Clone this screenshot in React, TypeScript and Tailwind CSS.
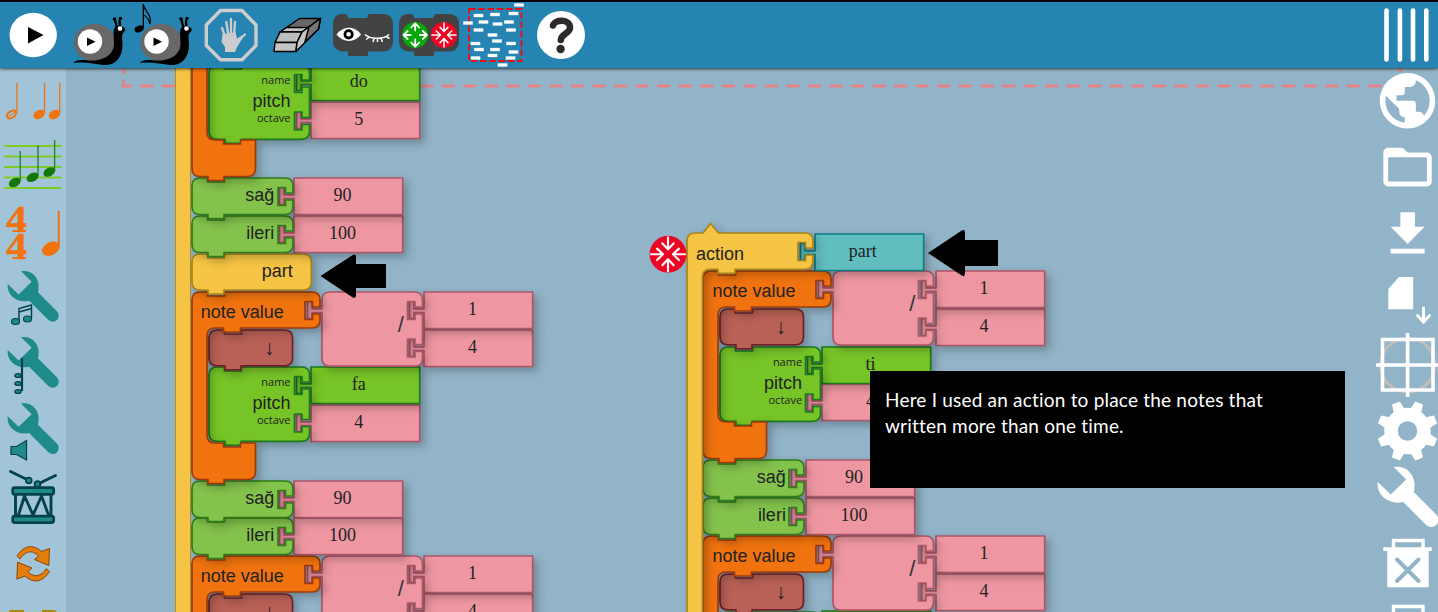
import React from "react";

type Tone = { fill: string; stroke: string };

const TONES: Record<string, Tone> = {
  orange: { fill: "#f0730f", stroke: "#9c3a0a" },
  yellow: { fill: "#f5c445", stroke: "#a9831a" },
  green: { fill: "#77c427", stroke: "#1b7a1c" },
  leaf: { fill: "#83c24b", stroke: "#2f7d17" },
  brown: { fill: "#b96156", stroke: "#71202a" },
  pink: { fill: "#ee97a2", stroke: "#ae5568" },
  teal: { fill: "#60bebe", stroke: "#0c7f86" },
};

/* ---------- block outlines ---------- */

const SOCKET_IN = 15;

function rightEdge(w: number, sockets: number[]): string {
  return sockets
    .map(
      (y) =>
        `V${y - 3.5} H${w - 7.5} V${y - 9} H${w - SOCKET_IN} V${y + 9} H${w - 7.5} V${y + 3.5} H${w}`
    )
    .join(" ");
}

function blockPath(w: number, h: number, sockets: number[], notch = true): string {
  const r = 8;
  const top = notch ? `H15.5 V4 H32.5 V0` : "";
  const tab = notch ? `H32 V${h + 4} H16 V${h}` : "";
  return `M${r} 0 ${top} H${w - r} Q${w} 0 ${w} ${r} ${rightEdge(w, sockets)} V${h - r} Q${w} ${h} ${w - r} ${h} ${tab} H${r} Q0 ${h} 0 ${h - r} V${r} Q0 0 ${r} 0 Z`;
}

function clampPath(): string {
  return `M8 0 H15.5 V4 H32.5 V0 H120 Q128 0 128 8 ${rightEdge(128, [18.5])} V28 Q128 36 120 36 H48.500 V40 H31.500 V36 H23 Q15 36 15 44 V143 Q15 151 23 151 H31.500 V155 H48.500 V151 H63.500 V179.500 Q63.500 187.500 55.500 187.500 H32 V191.500 H16 V187.500 H8 Q0 187.500 0 179.500 V8 Q0 0 8 0 Z`;
}

const PLUG = "V20.500 H-10 V26.500 H-14.500 V9.500 H-10 V16.800 H0";

const argPath = (h: number) => `M0 0 H108.700 V${h} H0 ${PLUG} Z`;

const DIVIDE_PATH = `M8 0 H92.500 Q100.500 0 100.500 8 ${rightEdge(100.5, [18.5, 56])} V66.200 Q100.500 74.200 92.500 74.200 H8 Q0 74.200 0 66.200 ${PLUG} V8 Q0 0 8 0 Z`;

function Shape({ d, tone }: { d: string; tone: Tone }) {
  return (
    <svg
      className="absolute top-0 left-0 h-px w-px overflow-visible drop-shadow-[4px_4px_4px_rgba(0,0,0,0.25)]"
      aria-hidden
    >
      <path d={d} fill={tone.fill} stroke={tone.stroke} strokeWidth="1.7" strokeLinejoin="round" />
    </svg>
  );
}

function Node({ x, y, children }: { x: number; y: number; children: React.ReactNode }) {
  return (
    <div className="absolute" style={{ left: x, top: y }}>
      {children}
    </div>
  );
}

function Arg({ x, y, text, tone = TONES.pink }: { x: number; y: number; text?: string; tone?: Tone }) {
  return (
    <Node x={x} y={y}>
      <Shape d={argPath(36.5)} tone={tone} />
      {text && (
        <div className="relative w-24 pt-2 text-center font-['Liberation_Serif',serif] text-[18px] leading-[18px] text-[#222]">
          {text}
        </div>
      )}
    </Node>
  );
}

const LABEL = "relative text-[18px] leading-[18px] whitespace-nowrap text-[#222]";

function Move({ x, y, label, value }: { x: number; y: number; label: string; value: string }) {
  return (
    <>
      <Arg x={x + 102.6} y={y} text={value} />
      <Node x={x} y={y}>
        <Shape d={blockPath(101, 36.5, [18.5])} tone={TONES.leaf} />
        <div className={`${LABEL} w-[82.500px] pt-2 text-right`}>{label}</div>
      </Node>
    </>
  );
}

type NoteProps = { x: number; y: number; name?: string; octave?: string; header?: boolean };

function NoteValue({ x, y, name, octave, header = true }: NoteProps) {
  return (
    <>
      <Arg x={x + 119} y={y + 113} text={octave} />
      <Arg x={x + 119} y={y + 75.3} text={name} tone={TONES.green} />
      <Node x={x + 16.7} y={y + 75.5}>
        <Shape d={blockPath(100.5, 74.3, [18.5, 56])} tone={TONES.green} />
        {name && (
          <div className="relative flex w-[82px] flex-col items-end pt-[8px] text-[#222]">
            <span className="font-['Open_Sans',sans-serif] text-[11px] leading-[14px]">name</span>
            <span className="mt-[5px] text-[18px] leading-[19px]">pitch</span>
            <span className="font-['Open_Sans',sans-serif] text-[11px] leading-[14px]">octave</span>
          </div>
        )}
      </Node>
      {header && (
        <>
          <Node x={x + 16.7} y={y + 38}>
            <Shape d={blockPath(83.500, 35.800, [])} tone={TONES.brown} />
            <div className="relative w-[66px] pt-[9px] text-right font-['Liberation_Serif',serif] text-[21px] leading-[18px] text-[#222]">
              ↓
            </div>
          </Node>
          <Arg x={x + 232.6} y={y + 37.8} text="4" />
          <Arg x={x + 232.6} y={y} text="1" />
          <Node x={x + 130} y={y}>
            <Shape d={DIVIDE_PATH} tone={TONES.pink} />
            <div className="relative w-[82px] pt-[21px] text-right text-[22px] leading-[23px] text-[#333]">
              /
            </div>
          </Node>
        </>
      )}
      <Node x={x} y={y}>
        <Shape d={clampPath()} tone={TONES.orange} />
        {header && <div className={`${LABEL} pt-[11px] pl-[9px]`}>note value</div>}
      </Node>
    </>
  );
}

function Canvas() {
  return (
    <div className="relative h-full flex-1 overflow-hidden">
      {/* plane shares the window's coordinates */}
      <div className="absolute -top-[68px] -left-[66px] h-[612px] w-[1438px]">
        <svg className="absolute inset-0" width="1438" height="612" fill="none" stroke="#e38488" strokeWidth="3">
          <path d="M123.500 70 V73 M123.500 81 V86 H131 M141 86 H152" strokeLinecap="round" />
          <path d="M162.700 86 H1384" strokeDasharray="10.700 10.850" strokeLinecap="round" />
          <path d="M1400.500 68 V72" />
        </svg>

        <NoteValue x={191.8} y={556} />
        <Move x={191.8} y={518.3} label="ileri" value="100" />
        <Move x={191.8} y={480.6} label="sağ" value="90" />
        <NoteValue x={191.8} y={291.800} name="fa" octave="4" />
        <Node x={191.8} y={253.8}>
          <Shape d={blockPath(119.300, 36, [])} tone={TONES.yellow} />
          <div className={`${LABEL} w-[101px] pt-2 text-right`}>part</div>
        </Node>
        <Move x={191.8} y={216} label="ileri" value="100" />
        <Move x={191.8} y={178.200} label="sağ" value="90" />
        <NoteValue x={191.8} y={-11} name="do" octave="5" header={false} />
        <div className="absolute top-0 left-[175px] h-[640px] w-[16px] border-x-[1.500px] border-[#b08a22] bg-[#f5c445]" />

        <NoteValue x={703.4} y={536} />
        <Move x={703.4} y={498} label="ileri" value="100" />
        <Move x={703.4} y={460.200} label="sağ" value="90" />
        <NoteValue x={703.4} y={271.400} name="ti" octave="4" />
        <Arg x={814.8} y={233.500} text="part" tone={TONES.teal} />
        <Node x={687} y={233.200}>
          <Shape
            tone={TONES.yellow}
            d={`M8 0 H16 L23.500 -9.500 L31.500 0 H118 Q126 0 126 8 ${rightEdge(126, [18.5])} V28 Q126 36.300 118 36.300 H48 V40.300 H31 V36.300 H23 Q15.500 36.300 15.500 44 V400 H0 V8 Q0 0 8 0 Z`}
          />
          <div className={`${LABEL} pt-[12px] pl-[9px]`}>action</div>
        </Node>

        <svg className="absolute inset-0" width="1438" height="612">
          <g transform="translate(668 254.300) scale(1.420)">
            <CollapseGlyph />
          </g>
          <path d="M320.500 276 L352 255.500 Q356 253 356 257 V264 H386 V288 H356 V295 Q356 299.500 352 297 Z" />
          <path d="M928 253 L961 231 Q965 228 965 233 V240 H998 V266 H965 V273 Q965 278 961 275 Z" />
        </svg>

        <div className="absolute top-[371px] left-[870px] h-[117px] w-[475px] bg-black pt-[16px] pl-[15px] font-['Lato','Open_Sans',sans-serif] text-[19px] leading-[26px] tracking-[0.2px] whitespace-nowrap text-white">
          <p>Here I used an action to place the notes that</p>
          <p>written more than one time.</p>
        </div>
      </div>
    </div>
  );
}

/* ---------- icons ---------- */

function Icon({ x, y, w = 66, h = 66, children }: { x: number; y: number; w?: number; h?: number; children: React.ReactNode }) {
  return (
    <svg className="shrink-0" width={w} height={h} viewBox={`${x} ${y} ${w} ${h}`} fill="none">
      {children}
    </svg>
  );
}

const QUARTERS = [0, 90, 180, 270];

function CollapseGlyph() {
  return (
    <g>
      <circle r="13" fill="#ee0523" />
      {QUARTERS.map((a) => (
        <g key={a} transform={`rotate(${a})`} stroke="#fff" strokeWidth="1.500" strokeLinecap="round" strokeLinejoin="round" fill="none">
          <path d="M0 -12 V-3.500 M-4 -7.700 L0 -3.500 L4 -7.700" />
        </g>
      ))}
    </g>
  );
}

function ExpandGlyph() {
  return (
    <g>
      <circle r="13" fill="#07a60b" />
      {QUARTERS.map((a) => (
        <g key={a} transform={`rotate(${a})`} stroke="#fff" strokeWidth="1.800" strokeLinecap="round" strokeLinejoin="round" fill="none">
          <path d="M0 -4.500 V-11.500 M-4 -7.500 L0 -11.700 L4 -7.500" />
        </g>
      ))}
    </g>
  );
}

function Snail({ dx }: { dx: number }) {
  return (
    <g transform={`translate(${dx} 0)`}>
      <path d="M95 24 C107 24 115.500 33 115.500 43 C115.500 54 108 61 95 61 C83 61 74 54 74 43 C74 33 82 24 95 24 Z" fill="#686868" />
      <path d="M73 63 C79 57 88 62 98 60 C108 58 114 52 114 44 C114 37 113 33 114 29 C115 26 118 26 121 26.500 C125 27 126.500 30 124 32 C121.500 33.500 122 38 122.500 43 C123 58 115 65.500 104 65 C93 64 86 61.500 73 63 Z" fill="#000" />
      <path d="M117 28 L115 20 M120 27 L119.500 21" stroke="#000" strokeWidth="2.400" strokeLinecap="round" />
      <circle cx="114.500" cy="19" r="1.800" fill="#000" />
      <circle cx="120.500" cy="18.500" r="1.800" fill="#000" />
      <circle cx="120" cy="28.500" r="2.300" fill="#fff" />
      <circle cx="90" cy="41.500" r="12.200" fill="#fff" />
      <path d="M87 37.500 V46 L95.500 41.800 Z" fill="#000" />
    </g>
  );
}

function ToolBlock({ x }: { x: number }) {
  return (
    <path
      transform={`translate(${x} 13)`}
      fill="#434343"
      d="M8 1 H12 Q15 1 15 5 H34.500 Q34.500 1 37 1 H51 Q60 2 60 11 V29 Q59 38 51 38.500 H35 V43 H15 V38.500 H9 Q0 37 0 29 V11 Q0 2 8 1 Z"
    />
  );
}

const CONFETTI: [number, number][] = [
  [519, 5], [478.500, 15.500], [495, 14.500], [513.500, 13.500], [468, 23], [483.500, 22], [497.500, 24], [509, 22],
  [478.500, 30], [511, 30], [492.500, 35], [497, 41], [475.500, 43.500], [511, 43.500], [479, 49.500], [495, 49.500],
  [513.500, 52], [492.500, 55.500], [475.500, 58], [510.500, 58], [502.500, 65],
];

function Toolbar() {
  return (
    <header className="relative z-10 flex h-[68px] w-full shrink-0 border-t-2 border-black bg-[#2584b1] shadow-[0_1px_3px_rgba(0,0,0,0.7)]">
      <Icon x={0} y={2}>
        <ellipse cx="33.200" cy="35" rx="23.700" ry="22.300" fill="#fff" />
        <path d="M28 27 V43.500 L43.500 35 Z" fill="#000" />
      </Icon>
      <Icon x={66} y={2}>
        <Snail dx={0} />
      </Icon>
      <Icon x={132} y={2}>
        <Snail dx={66.500} />
        <ellipse cx="139" cy="29" rx="4.700" ry="3.300" transform="rotate(-20 139 29)" fill="#000" />
        <path d="M143.300 28 V4 C144 12 152 13 150 24 C149 20 146 16 143.500 15" stroke="#000" strokeWidth="1.300" />
      </Icon>
      <Icon x={198} y={2}>
        <path d="M220.500 10.500 H242 L256 25 V45.500 L242 59.800 H220.500 L206.300 45.500 V25 Z" stroke="#ccc" strokeWidth="3.400" strokeLinejoin="round" />
        <g stroke="#ccc" strokeWidth="2.300" strokeLinecap="round">
          <path d="M225.500 37 L222 28 M228.300 35 L226.300 22 M231 35 V19 M234 35 L235 22 M237.500 41 L245 34.500" />
        </g>
        <path d="M223 31 L225 34 L235.500 32 L237 38.500 L245.500 33.500 L237 47 L235 52 H225 V47 L221.500 42 Z" fill="#ccc" />
      </Icon>
      <Icon x={264} y={2}>
        <g stroke="#000" strokeWidth="1.500" strokeLinejoin="round">
          <path d="M280 32 L299.500 18.500 H320.500 L302 32 Z" fill="#686868" />
          <path d="M280 32 L286.500 27.500 H308 L302 32 Z" fill="#c4c4c4" />
          <path d="M280 32 H302 L297 42.500 H275 Z" fill="#bdbdbd" />
          <path d="M275 42.500 H297 L296 51.500 H274 Z" fill="#c4c4c4" />
          <path d="M302 32 L320.500 18.500 L318.500 29 L296 51.500 L297 42.500 Z" fill="#c4c4c4" />
          <path d="M309 27 L320.500 18.500 L318.500 29 L305 42 Z" fill="#777" />
        </g>
      </Icon>
      <Icon x={330} y={2}>
        <ToolBlock x={333} />
        <path d="M336.500 34.500 C343 25.500 355 25.500 361 34.500 C355 43 343 43 336.500 34.500 Z" fill="#fff" />
        <circle cx="348.600" cy="34.300" r="3.700" stroke="#000" strokeWidth="2.800" fill="#fff" />
        <path d="M365 34.500 C370 39.500 384 39.500 389 34.500 M369 37.500 L366 39.500 M374 38.500 L373 42 M381 38.500 L382.500 42 M386 36.500 L389.500 38.500 M377.500 38.500 V42" stroke="#fff" strokeWidth="1.500" />
      </Icon>
      <Icon x={396} y={2}>
        <ToolBlock x={399} />
        <g transform="translate(415.200 35)"><ExpandGlyph /></g>
        <g transform="translate(444 35)"><CollapseGlyph /></g>
      </Icon>
      <Icon x={462} y={2} w={68}>
        <path d="M469 9 H521.500 V61 H469 Z" stroke="#f00a12" strokeWidth="1.800" strokeDasharray="6.500 2.800" />
        {CONFETTI.map(([cx, cy]) => (
          <path key={`${cx}-${cy}`} d={`M${cx - 4.800} ${cy} h9.600`} stroke="#fff" strokeWidth="3.300" />
        ))}
      </Icon>
      <Icon x={530} y={2}>
        <circle cx="561" cy="35" r="24" fill="#fff" />
        <path d="M553 25.500 C554.500 19 570 18.500 570 27.500 C570 34 561 33.500 560.800 40" stroke="#2b2b2b" strokeWidth="6.500" strokeLinecap="round" />
        <circle cx="560.600" cy="49" r="4.200" fill="#2b2b2b" />
      </Icon>
      <div className="ml-auto flex">
        <Icon x={1372} y={2}>
          <path d="M1386.500 10.500 V59.500 M1399.900 10.500 V59.500 M1413 10.500 V59.500 M1426.300 10.500 V59.500" stroke="#fff" strokeWidth="4.600" strokeLinecap="round" />
        </Icon>
      </div>
    </header>
  );
}

const WRENCH =
  "M16 1 C30 -1.500 40 11 36 26 L58.500 48.500 A7.200 7.200 0 0 1 48.500 59 L25.500 36 C11 39.500 -1.500 29 0 16 L13 28.500 L28.500 13.500 Z";

function TealWrench({ y }: { y: number }) {
  return <path d={WRENCH} transform={`translate(7.700 ${y}) scale(0.840)`} fill="#1f8a8a" />;
}

function Head({ cx, cy, rx, ry, fill }: { cx: number; cy: number; rx: number; ry: number; fill: string }) {
  return <ellipse cx={cx} cy={cy} rx={rx} ry={ry} fill={fill} transform={`rotate(-28 ${cx} ${cy})`} />;
}

const INK = "#04424a";

const TURN =
  "M17 556 C24 545 33 544 41.500 551.500 L49.500 548.500 L48.800 565.500 L34.500 559.500 L38.500 556 C32 549 25 551.500 20 559 Z";

function Palette() {
  return (
    <aside className="flex w-[66px] shrink-0 flex-col overflow-hidden bg-[#a2c4d8]">
      <Icon x={0} y={68} h={68}>
        <ellipse cx="11.500" cy="114.500" rx="5" ry="3.200" transform="rotate(-35 11.500 114.500)" stroke="#f0730f" strokeWidth="2" />
        <path d="M8 117 L15 112" stroke="#f0730f" strokeWidth="1" />
        <path d="M16.900 83 V113 M44.500 83 V113 M59.700 83 V113" stroke="#f0730f" strokeWidth="1.300" />
        <Head cx={39} cy={114.500} rx={6} ry={4.300} fill="#f0730f" />
        <Head cx={54.500} cy={114.500} rx={6} ry={4.300} fill="#f0730f" />
      </Icon>
      <Icon x={0} y={136}>
        <path d="M4 146 H61.500 M4 156.500 H61.500 M4 167 H61.500 M4 177.500 H61.500 M4 188 H61.500" stroke="#7fcb28" strokeWidth="2" />
        <path d="M20.200 151 V181 M38 145.500 V176 M54.600 140 V171" stroke="#2b8136" strokeWidth="1.400" />
        <Head cx={14.700} cy={182.500} rx={6.300} ry={4.300} fill="#137808" />
        <Head cx={32.500} cy={177.300} rx={6.300} ry={4.300} fill="#137808" />
        <Head cx={49.300} cy={172} rx={6.300} ry={4.300} fill="#137808" />
      </Icon>
      <Icon x={0} y={202}>
        <g fill="#f0730f" stroke="#f0730f" strokeWidth="0.400" fontFamily="Liberation Serif, serif" fontWeight="700" fontSize="37">
          <text x="6" y="232" textLength="21" lengthAdjust="spacingAndGlyphs">4</text>
          <text x="6" y="259" textLength="21" lengthAdjust="spacingAndGlyphs">4</text>
          <path d="M12.500 231 H26 M12.500 258 H26" strokeWidth="2" />
        </g>
        <path d="M58.700 211 V247" stroke="#f0730f" strokeWidth="2" />
        <Head cx={50.800} cy={248.700} rx={9.300} ry={6.500} fill="#f0730f" />
      </Icon>
      <Icon x={0} y={268}>
        <TealWrench y={270.500} />
        <path d="M19 321 V308.500 L31.500 305 V318 M19 312 L31.500 308.500" stroke={INK} strokeWidth="1.400" />
        <g fill="#1f8a8a" stroke={INK} strokeWidth="1.200">
          <ellipse cx="15.500" cy="321.500" rx="4" ry="3" />
          <ellipse cx="27.500" cy="319" rx="4" ry="3" />
        </g>
      </Icon>
      <Icon x={0} y={334}>
        <TealWrench y={336.500} />
        <path d="M22 358 V391" stroke={INK} strokeWidth="2.200" />
        <g fill="#1f8a8a" stroke={INK} strokeWidth="1.400">
          <ellipse cx="18" cy="375.500" rx="3" ry="1.900" />
          <ellipse cx="18" cy="383.500" rx="3" ry="1.900" />
          <ellipse cx="18" cy="391.500" rx="3" ry="1.900" />
        </g>
      </Icon>
      <Icon x={0} y={400}>
        <TealWrench y={402.800} />
        <path d="M11 446.500 H16.500 L26.500 440.500 V460 L16.500 454.500 H11 Z" fill="#1f8a8a" stroke={INK} strokeWidth="1.200" />
      </Icon>
      <Icon x={0} y={466}>
        <g stroke={INK} strokeWidth="2.900" strokeLinecap="round" strokeLinejoin="round">
          <path d="M10.500 471.500 L26 479 M55.500 475.500 L40 483" />
          <path d="M15.500 494 V517 M51 494 V517 M18.500 515 L24.500 496 L33 515 L41.500 496 L48.500 515" />
          <g fill="#1f8a8a" strokeWidth="1.800">
            <circle cx="28.800" cy="480.500" r="2.900" />
            <circle cx="37.500" cy="484" r="2.900" />
            <rect x="12.700" y="487.700" width="41" height="6.600" rx="2" strokeWidth="2.700" />
            <rect x="12.700" y="516.200" width="41" height="6.400" rx="2" strokeWidth="2.700" />
          </g>
        </g>
      </Icon>
      <Icon x={0} y={532}>
        <g fill="#e27d0a" stroke="#8a4405" strokeWidth="1">
          <path d={TURN} />
          <path transform="rotate(180 33.200 563.800)" d={TURN} />
        </g>
      </Icon>
      <Icon x={0} y={598} h={14}>
        <path d="M9 612 V611 Q10 610 12 610 H24 V612 Z M42 610 H53 Q56 610 57 612 H42 Z" fill="#b0850a" />
      </Icon>
    </aside>
  );
}

const TEETH = [22.5, 67.5, 112.5, 157.5, 202.5, 247.5, 292.5, 337.5];

function Menu() {
  return (
    <nav className="absolute top-0 right-0 z-[5] flex h-full w-[66px] flex-col overflow-hidden">
      <Icon x={1372} y={68}>
        <path
          transform="translate(1374.300 67.500) scale(2.770)"
          fill="#fff"
          d="M12 2C6.480 2 2 6.480 2 12s4.480 10 10 10 10-4.480 10-10S17.520 2 12 2zm-1 17.930c-3.950-.49-7-3.850-7-7.930 0-.62.08-1.210.21-1.790L9 15v1c0 1.100.9 2 2 2v1.930zm6.900-2.540c-.26-.81-1-1.390-1.900-1.390h-1v-3c0-.55-.45-1-1-1H8v-2h2c.55 0 1-.45 1-1V7h2c1.100 0 2-.9 2-2v-.41c2.930 1.190 5 4.060 5 7.410 0 2.080-.8 3.970-2.100 5.390z"
        />
      </Icon>
      <Icon x={1372} y={134}>
        <path
          transform="translate(1378.500 138) scale(2.420)"
          fill="#fff"
          d="M20 6h-8l-2-2H4c-1.100 0-1.990.9-1.990 2L2 18c0 1.100.9 2 2 2h16c1.100 0 2-.9 2-2V8c0-1.100-.9-2-2-2zm0 12H4V8h16v10z"
        />
      </Icon>
      <Icon x={1372} y={200}>
        <path transform="translate(1378.500 205) scale(2.430)" fill="#fff" d="M19 9h-4V3H9v6H5l7 7 7-7zM5 18v2h14v-2H5z" />
      </Icon>
      <Icon x={1372} y={266}>
        <path d="M1399 277 H1413.200 V309.300 H1388.300 V289 Z" fill="#fff" />
        <path d="M1423.500 308 V322 M1417.500 315.500 L1423.500 322 L1429.500 315.500" stroke="#fff" strokeWidth="3" strokeLinecap="round" />
      </Icon>
      <Icon x={1372} y={332}>
        <circle cx="1407.600" cy="365" r="27" stroke="#c0bdbd" strokeWidth="3.200" />
        <path d="M1382.500 339.500 H1433 V390 H1382.500 Z M1407.600 333 V397 M1376 365 H1438" stroke="#fff" strokeWidth="3.600" />
      </Icon>
      <Icon x={1372} y={398}>
        <g transform="translate(1407.500 431)">
          <circle r="16.500" stroke="#fff" strokeWidth="13.500" />
          {TEETH.map((a) => (
            <path key={a} transform={`rotate(${a})`} d="M-6 -20 L-4.200 -30.300 L4.200 -30.300 L6 -20 Z" fill="#fff" />
          ))}
        </g>
      </Icon>
      <Icon x={1372} y={464}>
        <path d={WRENCH} transform="translate(1377.700 466)" fill="#fff" />
      </Icon>
      <Icon x={1372} y={530}>
        <path d="M1393.500 548 V540.500 H1423 V548" stroke="#fff" strokeWidth="3.400" />
        <path d="M1383.300 547.300 H1431.700 V551 H1428.700 V587.300 H1387.300 V551 H1383.300 Z" fill="#fff" />
        <path d="M1397 559.500 L1418.500 581 M1418.500 559.500 L1397 581" stroke="#92b4c8" strokeWidth="4" strokeLinecap="round" />
      </Icon>
      <Icon x={1372} y={596} h={16}>
        <path d="M1393.500 616 V606.500 H1423 V616" stroke="#fff" strokeWidth="3.400" />
      </Icon>
    </nav>
  );
}

export default function App() {
  return (
    <div className="flex h-[612px] w-[1438px] flex-col overflow-hidden bg-[#92b4c8] font-['Liberation_Sans',Arial,sans-serif]">
      <Toolbar />
      <main className="relative flex h-[544px]">
        <Palette />
        <Canvas />
        <Menu />
      </main>
    </div>
  );
}
